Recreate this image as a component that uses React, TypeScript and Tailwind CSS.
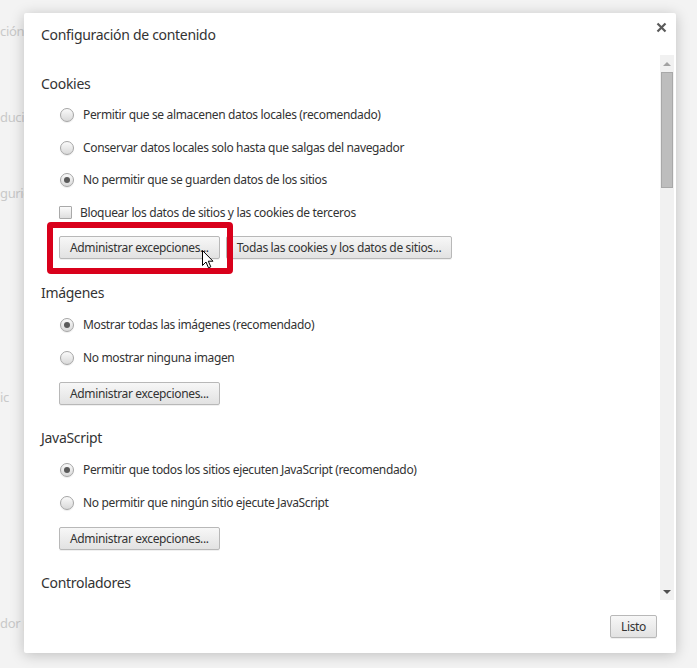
import React from 'react';

type Opt = { label: string; checked?: boolean };

const font = { fontFamily: '"Noto Sans", "Open Sans", sans-serif' };

function Radio({ checked }: { checked?: boolean }) {
  return (
    <span className="flex h-[14px] w-[14px] shrink-0 items-center justify-center rounded-full border border-[#a5a5a5] bg-gradient-to-b from-[#fafafa] to-[#d9d9d9] shadow-[0_1px_1px_rgba(0,0,0,0.08)]">
      {checked && <span className="h-[6px] w-[6px] rounded-full bg-[#5a5a5a]" />}
    </span>
  );
}

function RadioRow({ label, checked }: Opt) {
  return (
    <div className="flex h-[32.5px] items-center pl-[19px]">
      <Radio checked={checked} />
      <span className="ml-[9px] whitespace-nowrap">{label}</span>
    </div>
  );
}

function Button({ children }: { children: React.ReactNode }) {
  return (
    <button className="h-[23px] whitespace-nowrap rounded-[2px] border border-[#b8b8b8] bg-gradient-to-b from-[#f7f7f7] to-[#e2e2e2] px-[10px] text-[12px] leading-none tracking-[-0.35px] text-[#333] shadow-[0_1px_0_rgba(0,0,0,0.06)]">
      {children}
    </button>
  );
}

function Heading({ children, className }: { children: React.ReactNode; className: string }) {
  return <div className={`flex items-center text-[14px] tracking-[-0.3px] text-[#333] ${className}`}>{children}</div>;
}

function Cursor() {
  return (
    <svg width="12" height="19" viewBox="0 0 12 19" className="absolute left-[161px] top-[14px]">
      <path d="M0.5 0.5 L0.5 15.5 L4 12 L6.5 17.8 L8.8 16.8 L6.3 11.2 L11 11.2 Z" fill="#fff" stroke="#000" strokeWidth="1" strokeLinejoin="round" />
    </svg>
  );
}

function Scrollbar() {
  return (
    <div className="mr-[2px] flex w-[14px] flex-col bg-[#f1f1f1]">
      <div className="flex h-[17px] items-center justify-center">
        <span className="h-0 w-0 border-x-[4px] border-b-[4px] border-x-transparent border-b-[#a3a3a3]" />
      </div>
      <div className="mx-[1px] h-[116px] border border-[#a8a8a8] bg-[#bdbdbd]" />
      <div className="flex-1" />
      <div className="flex h-[17px] items-center justify-center">
        <span className="h-0 w-0 border-x-[4px] border-t-[4px] border-x-transparent border-t-[#505050]" />
      </div>
    </div>
  );
}

export default function App() {
  return (
    <div className="relative h-[668px] w-[697px] overflow-hidden bg-[#f3f3f3] text-[12px] tracking-[-0.35px] text-[#333]" style={font}>
      {/* page behind the dialog */}
      <div className="flex w-[24px] flex-col overflow-hidden text-[13px] text-[#c9c9c9]">
        <span className="mt-[22px] whitespace-nowrap leading-[18px]">ción</span>
        <span className="mt-[68px] whitespace-nowrap leading-[18px]">ducio</span>
        <span className="mt-[58px] whitespace-nowrap leading-[18px]">guric</span>
        <span className="mt-[186px] whitespace-nowrap leading-[18px]">ic</span>
        <span className="mt-[208px] whitespace-nowrap leading-[18px]">dor p</span>
      </div>

      {/* dialog */}
      <div className="absolute left-[24px] top-[13px] flex h-[640px] w-[652px] flex-col rounded-[2px] bg-white shadow-[0_2px_14px_rgba(0,0,0,0.22)]">
        <div className="relative h-[42px] shrink-0 pl-[17px] pt-[12px]">
          <div className="text-[14px] leading-5 tracking-[-0.3px] text-[#333]">Configuración de contenido</div>
          <svg width="11" height="11" viewBox="0 0 11 11" className="absolute right-[9px] top-[9px]">
            <path d="M1.5 1.5 L9.5 9.5 M9.5 1.5 L1.5 9.5" stroke="#5a5a5a" strokeWidth="2.2" />
          </svg>
        </div>

        <div className="flex min-h-0 flex-1">
          <div className="flex-1 overflow-hidden pl-[17px] pt-[12px]">
            <Heading className="h-8">Cookies</Heading>
            <RadioRow label="Permitir que se almacenen datos locales (recomendado)" />
            <RadioRow label="Conservar datos locales solo hasta que salgas del navegador" />
            <RadioRow label="No permitir que se guarden datos de los sitios" checked />
            <div className="flex h-[32.5px] items-center pl-[18px]">
              <span className="h-[13px] w-[13px] shrink-0 rounded-[1px] border border-[#a9a9a9] bg-gradient-to-b from-[#fbfbfb] to-[#dedede]" />
              <span className="ml-[8px] whitespace-nowrap">Bloquear los datos de sitios y las cookies de terceros</span>
            </div>
            <div className="relative mt-[7px] flex gap-[6px] pl-[18px]">
              <Button>Administrar excepciones...</Button>
              <Button>Todas las cookies y los datos de sitios...</Button>
              <div className="absolute left-[6px] top-[-14px] h-[52px] w-[186px] rounded-[4px] border-[6px] border-[#d9001b]" />
              <Cursor />
            </div>

            <Heading className="mt-4 h-[34px]">Imágenes</Heading>
            <RadioRow label="Mostrar todas las imágenes (recomendado)" checked />
            <RadioRow label="No mostrar ninguna imagen" />
            <div className="mt-2 pl-[18px]">
              <Button>Administrar excepciones...</Button>
            </div>

            <Heading className="mt-4 h-[33px]">JavaScript</Heading>
            <RadioRow label="Permitir que todos los sitios ejecuten JavaScript (recomendado)" checked />
            <RadioRow label="No permitir que ningún sitio ejecute JavaScript" />
            <div className="mt-2 pl-[18px]">
              <Button>Administrar excepciones...</Button>
            </div>

            <Heading className="mt-4 h-8">Controladores</Heading>
          </div>
          <Scrollbar />
        </div>

        <div className="flex h-[53px] shrink-0 justify-end pr-[19px] pt-[15px]">
          <Button>Listo</Button>
        </div>
      </div>
    </div>
  );
}
